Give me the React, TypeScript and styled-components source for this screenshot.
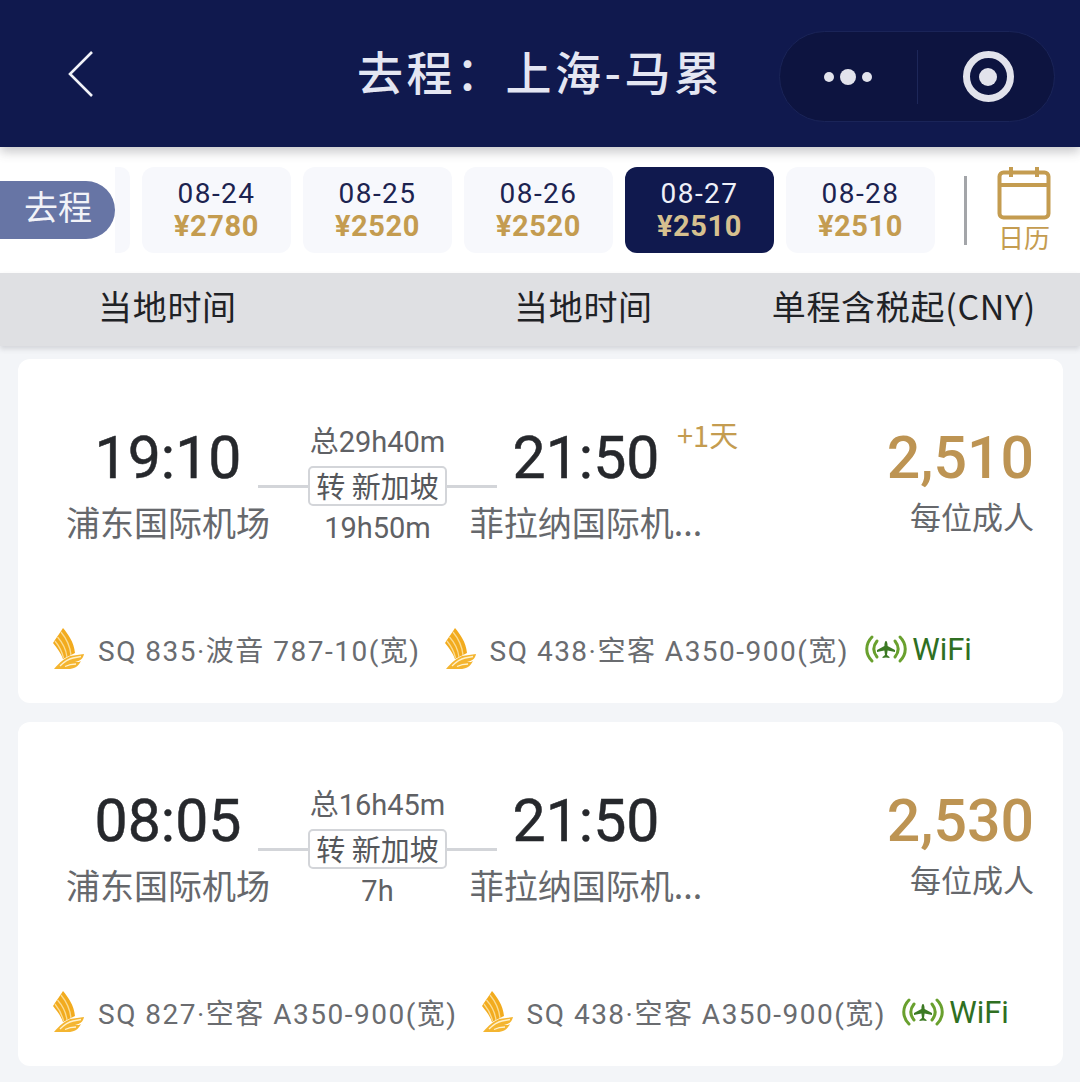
import React from 'react';
import styled, { createGlobalStyle } from 'styled-components';

const GlobalStyle = createGlobalStyle`
  html, body {
    margin: 0;
    padding: 0;
    background: #f3f5f8;
    font-family: "Noto Sans CJK SC", "Noto Sans", sans-serif;
  }
  * { box-sizing: border-box; }
`;

const Page = styled.div`
  width: 1080px;
  height: 1082px;
  overflow: hidden;
  background: #f3f5f8;
  display: flex;
  flex-direction: column;
`;

const Header = styled.header`
  height: 147px;
  flex: none;
  background: #10194e;
  position: relative;
  z-index: 3;
  display: flex;
  align-items: center;
  padding: 0 25px 0 68px;
  box-shadow: 0 5px 10px rgba(60, 60, 70, 0.28);
`;

const BackIcon = styled.svg`
  width: 26px;
  height: 46px;
  flex: none;
`;

const Title = styled.h1`
  flex: 1;
  margin: -8px 0 0;
  padding-left: 263px;
  font-size: 46px;
  font-weight: 500;
  line-height: 1;
  letter-spacing: 3.5px;
  color: #e4e6f2;
  white-space: nowrap;
`;

const Capsule = styled.div`
  width: 276px;
  height: 91px;
  margin-top: 6px;
  flex: none;
  display: flex;
  align-items: center;
  border-radius: 46px;
  background: #0d1440;
  border: 1px solid #1a2458;
`;

const CapsuleCell = styled.div`
  flex: 1;
  height: 54px;
  display: flex;
  align-items: center;
  justify-content: center;
  gap: 6px;
  & + & {
    border-left: 1px solid #1d2759;
  }
`;

const Dot = styled.span<{ $big?: boolean }>`
  width: ${p => (p.$big ? 16 : 10)}px;
  height: ${p => (p.$big ? 16 : 10)}px;
  border-radius: 50%;
  background: #e2e3ec;
`;

const RingDot = styled.span`
  width: 51px;
  height: 51px;
  margin-left: 5px;
  border-radius: 50%;
  border: 7px solid #e2e3ec;
  display: flex;
  align-items: center;
  justify-content: center;
  &::after {
    content: '';
    width: 18px;
    height: 18px;
    border-radius: 50%;
    background: #e2e3ec;
  }
`;

const DateStrip = styled.div`
  height: 126px;
  flex: none;
  background: #fff;
  display: flex;
  align-items: center;
  position: relative;
  z-index: 1;
`;

const TripPill = styled.div`
  width: 115px;
  height: 58px;
  flex: none;
  border-radius: 0 29px 29px 0;
  background: #6775a5;
  color: #f2f3f8;
  font-size: 34px;
  line-height: 50px;
  padding-left: 24px;
`;

const PeekCard = styled.div`
  width: 15px;
  height: 86px;
  flex: none;
  border-radius: 0 10px 10px 0;
  background: #f7f8fc;
  margin-right: 12px;
`;

const DateTabs = styled.div`
  display: flex;
  gap: 12px;
`;

const DateTab = styled.div<{ $active?: boolean }>`
  width: 149px;
  height: 86px;
  border-radius: 12px;
  background: ${p => (p.$active ? '#10194e' : '#f7f8fc')};
  display: flex;
  flex-direction: column;
  align-items: center;
  justify-content: center;
`;

const DateLabel = styled.span<{ $active?: boolean }>`
  font-family: Roboto, sans-serif;
  font-size: 28px;
  line-height: 32px;
  letter-spacing: 1.5px;
  color: ${p => (p.$active ? '#eef0f8' : '#1c2350')};
`;

const DatePrice = styled.span<{ $active?: boolean }>`
  font-family: Roboto, sans-serif;
  font-size: 29px;
  font-weight: 700;
  line-height: 33px;
  letter-spacing: 0.6px;
  color: ${p => (p.$active ? '#d6c08f' : '#c49c50')};
`;

const Divider = styled.div`
  width: 3px;
  height: 69px;
  flex: none;
  margin-left: 29px;
  background: #a3a5a9;
`;

const CalendarBtn = styled.div`
  margin-left: 30px;
  display: flex;
  flex-direction: column;
  align-items: center;
  color: #c49c50;
  font-size: 26px;
  line-height: 34px;
`;

const ColumnBar = styled.div`
  height: 73px;
  flex: none;
  background: #dfe0e3;
  box-shadow: 0 3px 5px rgba(90, 90, 100, 0.2);
  position: relative;
  z-index: 2;
  display: grid;
  grid-template-columns: 416px 255px 1fr;
  align-items: center;
  padding: 0 44px 8px 98px;
  font-size: 34px;
  letter-spacing: 0.7px;
  color: #1f2226;
  white-space: nowrap;
`;

const PriceHead = styled.span`
  text-align: right;
  margin-left: -20px;
`;

const List = styled.div`
  display: flex;
  flex-direction: column;
  gap: 19px;
  padding: 13px 17px 0 18px;
`;

const Card = styled.article`
  height: 344px;
  flex: none;
  background: #fff;
  border-radius: 12px;
  padding: 0 29px 0 35px;
  display: flex;
  flex-direction: column;
`;

const Route = styled.div`
  display: grid;
  grid-template-columns: 204px 201px 230px 1fr;
  height: 178px;
  margin-left: 13px;
  padding-top: 64px;
`;

const Stop = styled.div`
  position: relative;
  display: flex;
  flex-direction: column;
  align-items: center;
`;

const Clock = styled.div`
  font-family: Roboto, sans-serif;
  font-size: 59px;
  line-height: 70px;
  font-weight: 400;
  -webkit-text-stroke: 0.5px #26282c;
  color: #26282c;
`;

const Airport = styled.div`
  font-size: 34px;
  line-height: 60px;
  margin-top: -1px;
  color: #66686c;
  white-space: nowrap;
`;

const DayBadge = styled.span`
  position: absolute;
  left: 206px;
  top: -5px;
  font-size: 29px;
  line-height: 32px;
  color: #c49c50;
  white-space: nowrap;
`;

const Transfer = styled.div`
  margin: 0 -26px 0 -12px;
  display: flex;
  flex-direction: column;
  align-items: center;
`;

const Duration = styled.div`
  font-family: Roboto, "Noto Sans CJK SC", sans-serif;
  font-size: 29px;
  line-height: 38px;
  color: #5f6165;
  white-space: nowrap;
`;

const StopLine = styled.div`
  width: 100%;
  height: 40px;
  margin: 5px 0 3px;
  display: flex;
  align-items: center;
  &::before, &::after {
    content: '';
    flex: 1;
    height: 3px;
    background: #d3d5d9;
  }
`;

const StopTag = styled.span`
  height: 40px;
  padding: 0 6px;
  border: 2px solid #d3d5d9;
  border-radius: 5px;
  font-size: 29px;
  line-height: 34px;
  color: #55575b;
  white-space: nowrap;
`;

const FareCol = styled.div`
  display: flex;
  flex-direction: column;
  align-items: flex-end;
`;

const Fare = styled.div`
  font-family: Roboto, sans-serif;
  font-size: 59px;
  line-height: 70px;
  font-weight: 500;
  color: #bd9453;
`;

const FareNote = styled.div`
  font-size: 31px;
  line-height: 48px;
  margin-top: -1px;
  color: #66686c;
`;

const Flights = styled.div`
  margin-top: 91px;
  display: flex;
  align-items: center;
  white-space: nowrap;
`;

const Flight = styled.div`
  display: flex;
  align-items: center;
  margin-right: 24px;
`;

const BirdLogo = styled.svg`
  width: 32px;
  height: 42px;
  flex: none;
  margin-right: 13px;
`;

const FlightText = styled.span`
  font-family: Roboto, "Noto Sans CJK SC", sans-serif;
  font-size: 28px;
  letter-spacing: 1.5px;
  color: #6a6c70;
`;

const Wifi = styled.div`
  display: flex;
  align-items: center;
  gap: 3px;
  margin-left: -10px;
  font-family: Roboto, sans-serif;
  font-size: 31px;
  color: #2f6f22;
`;

const dates = [
  { d: '08-24', p: '¥2780' },
  { d: '08-25', p: '¥2520' },
  { d: '08-26', p: '¥2520' },
  { d: '08-27', p: '¥2510', active: true },
  { d: '08-28', p: '¥2510' },
];

const flights = [
  {
    dep: '19:10', arr: '21:50', plus: '+1天', total: '总29h40m', layover: '19h50m', price: '2,510',
    legs: ['SQ 835·波音 787-10(宽)', 'SQ 438·空客 A350-900(宽)'],
  },
  {
    dep: '08:05', arr: '21:50', total: '总16h45m', layover: '7h', price: '2,530',
    legs: ['SQ 827·空客 A350-900(宽)', 'SQ 438·空客 A350-900(宽)'],
  },
];

function Bird() {
  return (
    <BirdLogo viewBox="0 0 32 42">
      <path d="M10 0 C15 6 21 14 22 25 L10 31 C8 25 4 20 0 15 C3 10 7 5 10 0 Z" fill="#f2ab1e" />
      <path d="M8 4 C13 10 17 18 18 27 M4.500 9 C9 14 13 21 14 29 M2 13 C6 18 9 23 10.500 30" stroke="#fbdc93" strokeWidth="1.3" fill="none" />
      <path d="M1 41 C7 34 11 31 17 28 L31 26 C30 31 27 33 22 34 C25 34 27 34 28 33 C25 39 21 41 15 41 Z" fill="#f4b530" />
      <path d="M7 38 C11 34 15 31 20 30 L28 28.500 M12 38.500 C15 37 18 36 23 36" stroke="#fff1cc" strokeWidth="1.3" fill="none" />
    </BirdLogo>
  );
}

function WifiIcon() {
  return (
    <svg width="46" height="30" viewBox="0 0 46 30" fill="none">
      <path d="M9 3 C2 10 2 20 9 27 M14 7 C10 12 10 18 14 23 M37 3 C44 10 44 20 37 27 M32 7 C36 12 36 18 32 23" stroke="#69a02e" strokeWidth="3" strokeLinecap="round" />
      <path d="M23 7 C24 7 24.600 9 24.600 12 L32 16 L32 18 L24.600 16.500 L24 21 L26.500 23 L26.500 24 L23 23.400 L19.500 24 L19.500 23 L22 21 L21.400 16.500 L14 18 L14 16 L21.400 12 C21.400 9 22 7 23 7 Z" fill="#3c7a24" />
    </svg>
  );
}

export default function App() {
  return (
    <Page>
      <GlobalStyle />
      <Header>
        <BackIcon viewBox="0 0 26 46" fill="none">
          <path d="M24 2 L2 24 L24 46" stroke="#f1f2f8" strokeWidth="2.600" transform="translate(0 -1)" />
        </BackIcon>
        <Title>去程：上海-马累</Title>
        <Capsule>
          <CapsuleCell>
            <Dot />
            <Dot $big />
            <Dot />
          </CapsuleCell>
          <CapsuleCell>
            <RingDot />
          </CapsuleCell>
        </Capsule>
      </Header>

      <DateStrip>
        <TripPill>去程</TripPill>
        <PeekCard />
        <DateTabs>
          {dates.map(item => (
            <DateTab key={item.d} $active={item.active}>
              <DateLabel $active={item.active}>{item.d}</DateLabel>
              <DatePrice $active={item.active}>{item.p}</DatePrice>
            </DateTab>
          ))}
        </DateTabs>
        <Divider />
        <CalendarBtn>
          <svg width="54" height="54" viewBox="0 0 54 54" fill="none">
            <rect x="2.500" y="6.500" width="49" height="45" rx="4" stroke="#c49c50" strokeWidth="4" />
            <path d="M2.500 19 H51.500 M14 1 V11 M40 1 V11" stroke="#c49c50" strokeWidth="4" />
          </svg>
          日历
        </CalendarBtn>
      </DateStrip>

      <ColumnBar>
        <span>当地时间</span>
        <span>当地时间</span>
        <PriceHead>单程含税起(CNY)</PriceHead>
      </ColumnBar>

      <List>
        {flights.map(f => (
          <Card key={f.dep}>
            <Route>
              <Stop>
                <Clock>{f.dep}</Clock>
                <Airport>浦东国际机场</Airport>
              </Stop>
              <Transfer>
                <Duration>{f.total}</Duration>
                <StopLine>
                  <StopTag>转 新加坡</StopTag>
                </StopLine>
                <Duration>{f.layover}</Duration>
              </Transfer>
              <Stop>
                <Clock>{f.arr}</Clock>
                {f.plus && <DayBadge>{f.plus}</DayBadge>}
                <Airport>菲拉纳国际机...</Airport>
              </Stop>
              <FareCol>
                <Fare>{f.price}</Fare>
                <FareNote>每位成人</FareNote>
              </FareCol>
            </Route>
            <Flights>
              {f.legs.map((leg, i) => (
                <Flight key={i}>
                  <Bird />
                  <FlightText>{leg}</FlightText>
                </Flight>
              ))}
              <Wifi>
                <WifiIcon />
                WiFi
              </Wifi>
            </Flights>
          </Card>
        ))}
      </List>
    </Page>
  );
}
